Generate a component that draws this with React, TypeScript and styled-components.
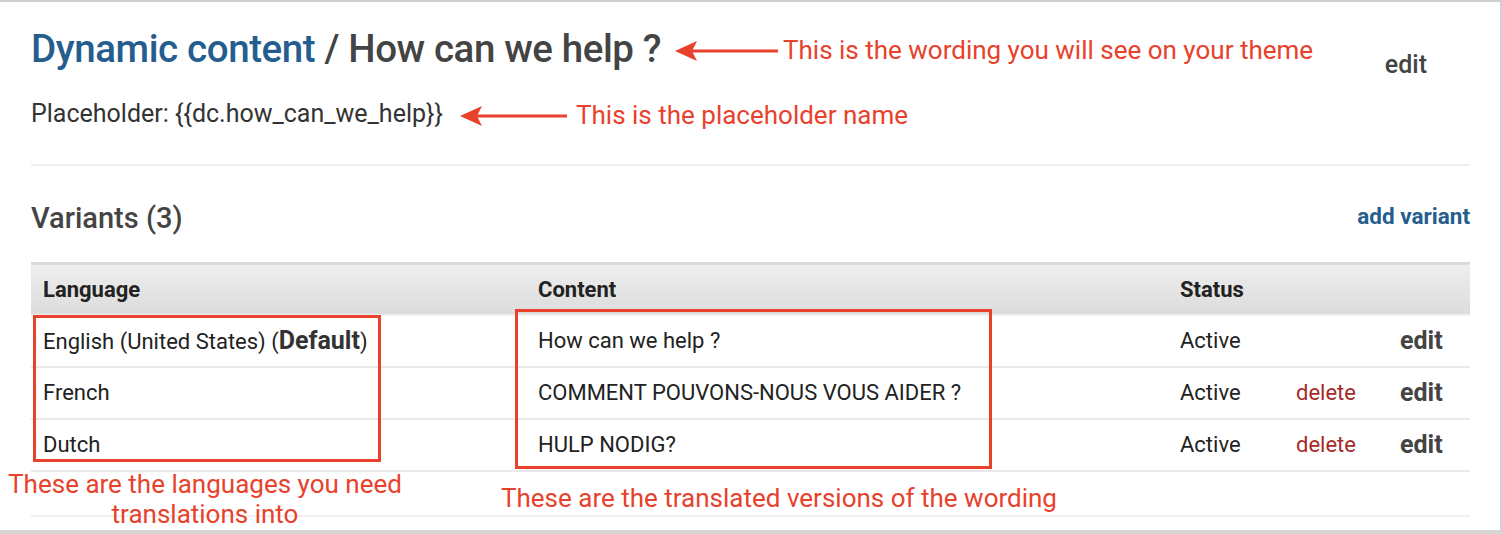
import React from "react";
import styled, { createGlobalStyle } from "styled-components";

const Global = createGlobalStyle`
  html, body { margin: 0; padding: 0; background: #fff; }
  body { font-family: Roboto, "Liberation Sans", Arial, sans-serif; }
`;

const RED = "#e8412c";

const Page = styled.div`
  position: relative;
  box-sizing: border-box;
  width: 1502px;
  height: 534px;
  background: #fff;
  border-top: 2px solid #cfcfcf;
  border-right: 2px solid #cfcfcf;
  border-bottom: 4px solid #d6d6d6;
  padding: 0 30px 0 31px;
  overflow: hidden;
`;

const Header = styled.div`
  display: flex;
  justify-content: space-between;
  align-items: flex-start;
  padding-top: 24px;
`;

const Title = styled.h1`
  margin: 0;
  font-size: 38.5px;
  font-weight: 500;
  line-height: 46px;
  color: #444;
  letter-spacing: -0.4px;
`;

const Crumb = styled.span`
  color: #245d8e;
`;

const HeaderEdit = styled.a`
  font-size: 25px;
  font-weight: 500;
  line-height: 30px;
  color: #444;
  margin: 24px 43px 0 0;
`;

const Placeholder = styled.p`
  margin: 20px 0 0;
  font-size: 25px;
  line-height: 28px;
  color: #333;
`;

const Divider = styled.div<{ $top: number }>`
  height: 2px;
  background: #efefef;
  margin-top: ${(p) => p.$top}px;
`;

const SectionHead = styled.div`
  display: flex;
  justify-content: space-between;
  align-items: center;
  height: 52px;
  margin-top: 26px;
`;

const SectionTitle = styled.h2`
  margin: 0;
  font-size: 29px;
  font-weight: 500;
  color: #444;
`;

const AddLink = styled.a`
  font-size: 22.5px;
  font-weight: 700;
  color: #245d8e;
  margin-top: -4px;
`;

const Table = styled.table`
  width: 100%;
  border-collapse: collapse;
  margin-top: 18px;
  table-layout: fixed;
`;

const HeadRow = styled.tr`
  height: 52px;
  background: linear-gradient(#eeeeee, #dcdcdc);
  border-top: 2px solid #d9d9d9;
  border-bottom: 1px solid #f4f4f4;
`;

const Th = styled.th`
  text-align: left;
  font-size: 22px;
  font-weight: 700;
  color: #222;
  padding: 0 12px;
`;

const Row = styled.tr`
  height: 52px;
  border-bottom: 2px solid #e9e9e9;
`;

const Td = styled.td<{ $flush?: boolean }>`
  font-size: 22px;
  color: #222;
  padding: ${(p) => (p.$flush ? "0" : "0 12px")};
  padding-bottom: 1px;
  white-space: nowrap;
`;

const Strong = styled.b`
  font-size: 25px;
  font-weight: 700;
  color: #333;
`;

const DeleteLink = styled.a`
  font-size: 22px;
  color: #a52a2a;
`;

const EditLink = styled.a`
  font-size: 25px;
  font-weight: 700;
  color: #444;
`;

/* annotation overlays */
const Note = styled.div<{ $x: number; $y: number; $w?: number }>`
  position: absolute;
  left: ${(p) => p.$x}px;
  top: ${(p) => p.$y}px;
  width: ${(p) => (p.$w ? `${p.$w}px` : "auto")};
  color: ${RED};
  font-size: 26px;
  line-height: 30px;
  white-space: nowrap;
  text-align: center;
`;

const Frame = styled.div<{ $x: number; $y: number; $w: number; $h: number }>`
  position: absolute;
  left: ${(p) => p.$x}px;
  top: ${(p) => p.$y}px;
  width: ${(p) => p.$w}px;
  height: ${(p) => p.$h}px;
  box-sizing: border-box;
  border: 3px solid ${RED};
`;

const ArrowSvg = styled.svg<{ $x: number; $y: number }>`
  position: absolute;
  left: ${(p) => p.$x}px;
  top: ${(p) => p.$y}px;
`;

function Arrow({ x, y, len }: { x: number; y: number; len: number }) {
  return (
    <ArrowSvg $x={x} $y={y} width={len} height={22} viewBox={`0 0 ${len} 22`}>
      <polygon points="0,11 22,1 17,11 22,21" fill={RED} />
      <rect x={16} y={9.5} width={len - 16} height={3} fill={RED} />
    </ArrowSvg>
  );
}

const rows = [
  { lang: "English (United States)", def: true, content: "How can we help ?", del: false },
  { lang: "French", def: false, content: "COMMENT POUVONS-NOUS VOUS AIDER ?", del: true },
  { lang: "Dutch", def: false, content: "HULP NODIG?", del: true },
];

export default function App() {
  return (
    <Page>
      <Global />
      <Header>
        <Title>
          <Crumb>Dynamic content</Crumb> / How can we help ?
        </Title>
        <HeaderEdit>edit</HeaderEdit>
      </Header>
      <Placeholder>Placeholder: {"{{dc.how_can_we_help}}"}</Placeholder>
      <Divider $top={36} />
      <SectionHead>
        <SectionTitle>Variants (3)</SectionTitle>
        <AddLink>add variant</AddLink>
      </SectionHead>
      <Table>
        <colgroup>
          <col style={{ width: 495 }} />
          <col style={{ width: 642 }} />
          <col style={{ width: 128 }} />
          <col style={{ width: 104 }} />
          <col />
        </colgroup>
        <thead>
          <HeadRow>
            <Th>Language</Th>
            <Th>Content</Th>
            <Th>Status</Th>
            <Th></Th>
            <Th></Th>
          </HeadRow>
        </thead>
        <tbody>
          {rows.map((r) => (
            <Row key={r.lang}>
              <Td>
                {r.lang}
                {r.def && (
                  <>
                    {" ("}
                    <Strong>Default</Strong>)
                  </>
                )}
              </Td>
              <Td>{r.content}</Td>
              <Td>Active</Td>
              <Td $flush>{r.del && <DeleteLink>delete</DeleteLink>}</Td>
              <Td $flush>
                <EditLink>edit</EditLink>
              </Td>
            </Row>
          ))}
        </tbody>
      </Table>
      <Divider $top={43} />

      <Arrow x={675} y={38} len={103} />
      <Note $x={783} $y={33}>This is the wording you will see on your theme</Note>
      <Arrow x={460} y={103} len={107} />
      <Note $x={576} $y={98}>This is the placeholder name</Note>
      <Frame $x={33} $y={313} $w={348} $h={147} />
      <Frame $x={515} $y={307} $w={477} $h={160} />
      <Note $x={0} $y={467} $w={410}>
        These are the languages you need
        <br />
        translations into
      </Note>
      <Note $x={501} $y={481}>These are the translated versions of the wording</Note>
    </Page>
  );
}
